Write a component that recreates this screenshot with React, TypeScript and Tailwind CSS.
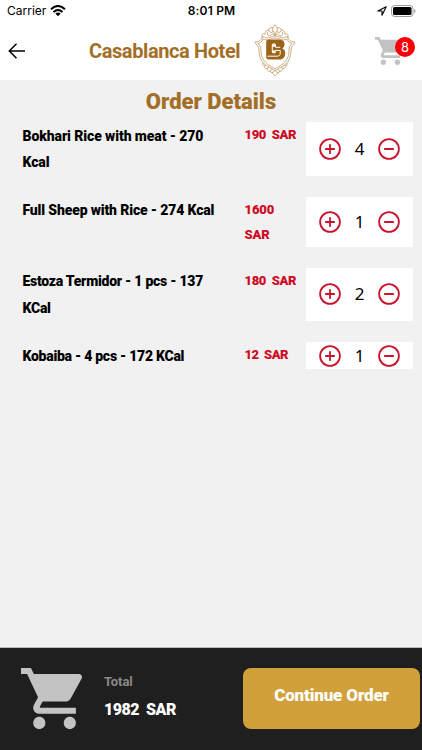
import React from "react";

const CART =
  "M7 18c-1.1 0-1.99.9-1.99 2S5.9 22 7 22s2-.9 2-2-.9-2-2-2zM1 2v2h2l3.6 7.59-1.35 2.45c-.16.28-.25.61-.25.96 0 1.1.9 2 2 2h12v-2H7.42c-.14 0-.25-.11-.25-.25l.03-.12.9-1.63h7.45c.75 0 1.41-.41 1.75-1.03l3.58-6.49c.08-.14.12-.31.12-.48 0-.55-.45-1-1-1H5.21l-.94-2H1zm16 16c-1.1 0-1.99.9-1.99 2s.89 2 1.99 2 2-.9 2-2-.9-2-2-2z";

function Cart({ className }: { className: string }) {
  return (
    <svg viewBox="1 2 20 20" className={className} fill="#c3c3c3">
      <path d={CART} />
    </svg>
  );
}

function CrestHalf() {
  return (
    <g fill="none" stroke="#b78a4c" strokeWidth="0.7">
      <path d="M21 1c-2 2-3 4-2 6s2 2 2 4M19 4c-3-1-5 1-4 3s4 2 4 0M15 6c-3 0-4 2-4 4M14 8c-2 3 1 5 3 3s4-1 4 1M11 10c-3-1-4 2-2 4" />
      <path d="M21 12c-4 0-5 2-8 2-2 0-3-2-5-1C7 17 4 18 1 18c1 3 4 4 4 8 0 8 3 13 8 16 3 2 6 3 8 5" />
      <path d="M21 14c-4 0-5 2-8 2-2 0-3-1-4-1-1 3-3 4-5 4.500 2 2 3 3 3 7 0 7 3 11 7 14 3 2 5 3 7 4.500" />
      <path d="M9 39c-1 3 2 3 3 2M10 42c1 3 3 3 5 1M13 44c0 4 4 4 5 1M16 47c1 3 4 1 5-1M18 48c0 2 2 3 3 4" />
    </g>
  );
}

function Crest() {
  return (
    <svg viewBox="0 0 42 53" className="ml-[14px] h-[53px] w-[42px] shrink-0">
      <CrestHalf />
      <g transform="translate(42 0) scale(-1 1)">
        <CrestHalf />
      </g>
      <path
        fill="#9d6417"
        d="M15 15.500h9.500c3.800 0 6 1.600 6 4.800 0 2-.8 3.400-2.300 4.200 2 .8 3 2.500 3 4.900 0 3.900-2.500 6.100-6.300 6.100H15c-1.800 0-2.800-1-2.800-2.700V18.200c0-1.700 1-2.700 2.800-2.700z"
      />
      <path fill="none" stroke="#fff" strokeWidth="1" d="M13.500 32.200h9.700c2 0 3-1 3-2.800v-3h-4.700v1.400q0 1-1 1h-1.200q-1 0-1-1v-7q0-1 1-1h1.200q1 0 1 1v2.500h4.700" />
      <path fill="#fff" d="M18 20.300h3.200v2.400H18zM18 26.400h3.200v2.400H18z" />
    </svg>
  );
}

function RoundButton({ plus, label }: { plus?: boolean; label: string }) {
  return (
    <button aria-label={label} className="h-[22px] w-[22px] shrink-0">
      <svg viewBox="0 0 22 22" className="h-[22px] w-[22px]" fill="none" stroke="#c8142c" strokeWidth="1.8" strokeLinecap="round">
        <circle cx="11" cy="11" r="9.900" />
        <path d={plus ? "M6.800 11h8.400M11 6.800v8.400" : "M6.800 11h8.400"} />
      </svg>
    </button>
  );
}

const ITEMS = [
  { lines: ["Bokhari Rice with meat - 270", "Kcal"], price: ["190  SAR"], qty: 4, h: "h-[53.6px]", track: "tracking-[-0.1px]", priceTrack: "tracking-[-0.35px]" },
  { lines: ["Full Sheep with Rice - 274 Kcal"], price: ["1600", "SAR"], qty: 1, h: "h-[50px]", track: "tracking-[-0.15px]", priceTrack: "tracking-[-0.1px]" },
  { lines: ["Estoza Termidor - 1 pcs - 137", "KCal"], price: ["180  SAR"], qty: 2, h: "h-[53.6px]", track: "tracking-[-0.26px]", priceTrack: "tracking-[-0.35px]" },
  { lines: ["Kobaiba - 4 pcs - 172 KCal"], price: ["12  SAR"], qty: 1, h: "h-[26.8px]", track: "tracking-[-0.27px]", priceTrack: "tracking-[-0.5px]" },
];

export default function App() {
  return (
    <div className="flex h-[750px] w-[422px] flex-col overflow-hidden bg-[#f1f1f1] font-['Roboto','Liberation_Sans',sans-serif]">
      <header className="h-20 shrink-0 bg-white">
        <div className="flex h-[22px] items-center font-['Inter',sans-serif] text-black">
          <div className="flex flex-1 items-center pl-[7px]">
            <span className="text-[12px] leading-[22px]">Carrier</span>
            <svg viewBox="0 0 16 12" className="ml-[4px] h-[12px] w-[16px]">
              <path d="M1 4.200Q8-2.200 15 4.200M3.500 7Q8 3 12.500 7" fill="none" stroke="#000" strokeWidth="2" />
              <path d="M5.300 8.500Q8 6.300 10.700 8.500L8 11.300z" />
            </svg>
          </div>
          <span className="text-[12px] font-semibold leading-[22px] tracking-[0.2px]">8:01 PM</span>
          <div className="flex flex-1 items-center justify-end pr-[6px]">
            <svg viewBox="0 0 10 10" className="mr-[4px] h-[10px] w-[10px]" fill="none" stroke="#000" strokeWidth="1.100" strokeLinejoin="round">
              <path d="M.8 5L9.200.8 5 9.200V5z" />
            </svg>
            <svg viewBox="0 0 25 12" className="h-[12px] w-[25px]">
              <rect x=".5" y=".5" width="21.500" height="11" rx="3" fill="#fff" stroke="#999" />
              <rect x="2" y="2" width="18.500" height="8" rx="1.500" />
              <path d="M23.200 4q1.300.5 1.300 2t-1.300 2z" fill="#999" />
            </svg>
          </div>
        </div>
        <div className="flex h-[57px] items-center">
          <svg viewBox="0 0 17 16" className="ml-[8px] h-[16px] w-[17px]" fill="none" stroke="#000" strokeWidth="1.500">
            <path d="M17 8H1.500M8.500.8L1.300 8l7.200 7.200" />
          </svg>
          <h1 className="ml-[64px] w-[151px] whitespace-nowrap text-[20px] font-bold leading-[30px] tracking-[-0.4px] text-[#a36f26]">Casablanca Hotel</h1>
          <Crest />
          <div className="relative ml-[79px] h-[28px] w-[28px]">
            <Cart className="h-[28px] w-[28px]" />
            <span className="absolute left-[20px] top-0 h-5 w-5 rounded-full bg-[#fb0007] text-center font-['Inter',sans-serif] text-[13px] leading-5 text-white">8</span>
          </div>
        </div>
      </header>

      <main className="flex-1">
        <h2 className="h-[42px] pt-px text-center text-[22px] font-black leading-[42px] text-[#a36f26]">Order Details</h2>
        <div className="flex flex-col gap-[21px]">
          {ITEMS.map((it) => (
            <div key={it.lines[0]} className={`flex pl-[22.5px] pr-[9px] ${it.h}`}>
              <div className={`w-[222px] whitespace-nowrap pt-[0.5px] text-[14px] font-black leading-[26.8px] text-black ${it.track}`}>
                {it.lines.map((l) => (
                  <div key={l}>{l}</div>
                ))}
              </div>
              <div className={`w-[61.5px] whitespace-pre text-[13px] font-black leading-[25px] text-[#cf0a24] ${it.priceTrack}`}>
                {it.price.map((p) => (
                  <div key={p}>{p}</div>
                ))}
              </div>
              <div className="flex flex-1 items-center justify-between bg-white px-[13px]">
                <RoundButton plus label="Increase" />
                <span className="font-['Noto_Sans',sans-serif] text-[17px] leading-[22px] text-black">{it.qty}</span>
                <RoundButton label="Decrease" />
              </div>
            </div>
          ))}
        </div>
      </main>

      <footer className="flex h-[103px] shrink-0 border-t border-[#bbb] bg-[#1f1f1f] pl-[21px] pt-5">
        <Cart className="h-[61px] w-[61px]" />
        <div className="ml-[22px] w-[139px] whitespace-pre">
          <div className="pt-px text-[13px] font-bold leading-[26px] tracking-[-0.1px] text-[#8a8a8a]">Total</div>
          <div className="mt-px text-[16px] font-black leading-[28px] tracking-[-0.5px] text-white">1982  SAR</div>
        </div>
        <button className="h-[61px] w-[177px] rounded-[8px] bg-[#d2a03a] pb-[6px] text-[17px] font-black tracking-[-0.15px] text-white">Continue Order</button>
      </footer>
    </div>
  );
}
